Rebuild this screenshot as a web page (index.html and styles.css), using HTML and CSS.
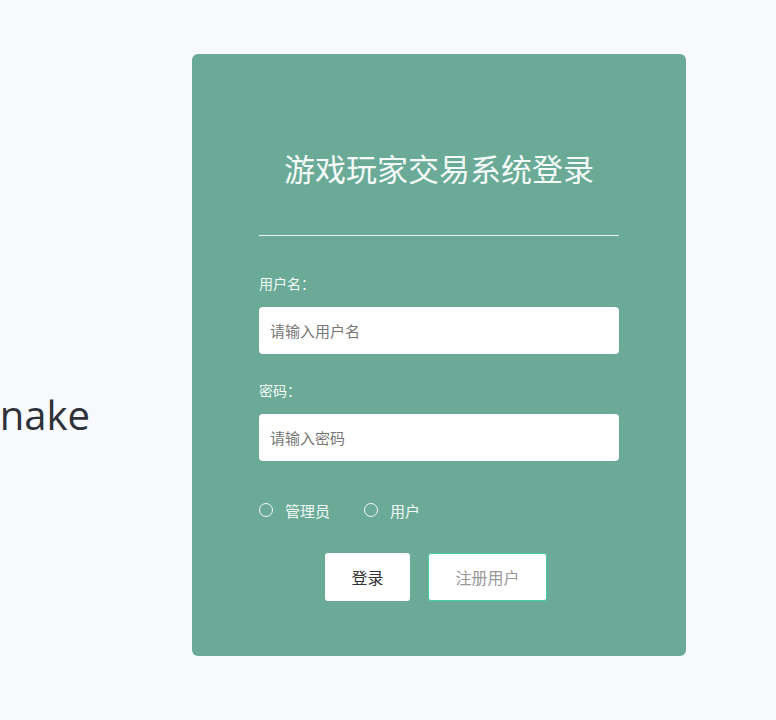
FILE: index.html
```html
<!DOCTYPE html>
<html lang="zh-CN">
<head>
<meta charset="utf-8">
<title>游戏玩家交易系统登录</title>
<link rel="stylesheet" href="styles.css">
</head>
<body>
<div class="page">
  <div class="brand"><span class="brand-text">Snake</span></div>
  <form class="card">
    <h1 class="title">游戏玩家交易系统登录</h1>
    <div class="divider"></div>
    <label class="label" for="u">用户名：</label>
    <input class="field" id="u" type="text" placeholder="请输入用户名">
    <label class="label label-gap" for="p">密码：</label>
    <input class="field" id="p" type="password" placeholder="请输入密码">
    <div class="roles">
      <label class="role"><input class="radio" type="radio" name="role"><span>管理员</span></label>
      <label class="role"><input class="radio" type="radio" name="role"><span>用户</span></label>
    </div>
    <div class="actions">
      <button type="button" class="btn btn-login">登录</button>
      <button type="button" class="btn btn-register">注册用户</button>
    </div>
  </form>
</div>
</body>
</html>
```
FILE: styles.css
```css
html, body {
  margin: 0;
  padding: 0;
  background: #f8f9fc;
  font-family: "Noto Sans CJK SC", "Noto Sans", sans-serif;
  overflow: hidden;
}
.page {
  display: flex;
  align-items: flex-start;
  gap: 102px;
  padding-top: 54px;
  height: 720px;
  box-sizing: border-box;
}
.brand {
  width: 90px;
  flex: none;
  display: flex;
  justify-content: flex-end;
  padding-top: 336px;
}
.brand-text {
  font-family: "Open Sans", "Noto Sans", sans-serif;
  font-size: 40px;
  line-height: 50px;
  color: #2e3138;
  white-space: nowrap;
}
.card {
  width: 494px;
  height: 602px;
  box-sizing: border-box;
  background: #6aaa97;
  border-radius: 6px;
  padding: 94px 67px 0;
  display: flex;
  flex-direction: column;
  margin: 0;
}
.title {
  margin: 0;
  font-size: 31px;
  line-height: 40px;
  font-weight: 400;
  color: #f3faf7;
  text-align: center;
}
.divider {
  height: 1px;
  background: #e6f4ef;
  margin-top: 47px;
}
.label {
  margin-top: 37px;
  font-size: 14px;
  line-height: 20px;
  color: #f2faf7;
}
.label-gap {
  margin-top: 26px;
}
.field {
  margin-top: 14px;
  height: 47px;
  box-sizing: border-box;
  border: none;
  border-radius: 4px;
  background: #fff;
  padding: 0 11px;
  font-family: inherit;
  font-size: 15px;
  color: #333;
  outline: none;
}
.field::placeholder {
  color: #777;
}
.roles {
  margin-top: 39px;
  display: flex;
  gap: 34px;
  height: 20px;
  align-items: center;
}
.role {
  display: flex;
  align-items: center;
  gap: 12px;
  font-size: 15px;
  color: #f2faf7;
}
.radio {
  appearance: none;
  -webkit-appearance: none;
  margin: 0;
  width: 14px;
  height: 14px;
  border: 1px solid #f2faf7;
  border-radius: 50%;
  box-sizing: border-box;
  background: transparent;
}
.actions {
  margin-top: 33px;
  display: flex;
  justify-content: center;
  gap: 18px;
  padding-right: 6px;
}
.btn {
  height: 48px;
  border-radius: 3px;
  background: #fff;
  font-family: inherit;
  font-size: 16px;
  cursor: pointer;
}
.btn-login {
  width: 85px;
  border: none;
  color: #333;
}
.btn-register {
  width: 119px;
  border: 1px solid #43cfa3;
  color: #999;
}
```
